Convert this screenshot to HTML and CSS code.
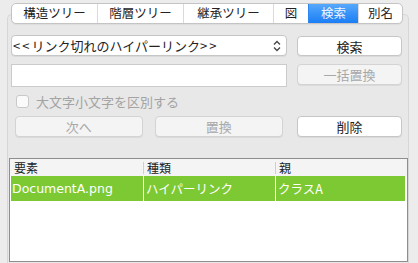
FILE: index.html
```html
<!DOCTYPE html>
<html lang="ja">
<head>
    <meta charset="UTF-8">
    <meta name="viewport" content="width=device-width, initial-scale=1.0">
    <title>検索</title>
    <link rel="stylesheet" href="styles.css">
</head>
<body>
    <div class="tabs">
        <span class="tab tab-struct">構造ツリー</span>
        <span class="tab tab-layer">階層ツリー</span>
        <span class="tab tab-inherit">継承ツリー</span>
        <span class="tab tab-fig">図</span>
        <span class="tab tab-search selected">検索</span>
        <span class="tab tab-alias">別名</span>
    </div>

    <div class="panel">
        <div class="form">
            <div class="row row-top">
                <div class="combo">
                    <span><span class="angle">&lt;&lt;</span>リンク切れのハイパーリンク<span class="angle">&gt;&gt;</span></span>
                    <svg class="chevrons" width="8" height="12" viewBox="0 0 8 12">
                        <polyline points="1,4.5 4,1.5 7,4.5" />
                        <polyline points="1,7.5 4,10.5 7,7.5" />
                    </svg>
                </div>
                <button class="btn btn-side">検索</button>
            </div>

            <div class="row row-field">
                <div class="field"></div>
                <button class="btn btn-side" disabled>一括置換</button>
            </div>

            <label class="check">
                <span class="box"></span>
                大文字小文字を区別する
            </label>

            <div class="row row-buttons">
                <div class="left-buttons">
                    <button class="btn btn-next" disabled>次へ</button>
                    <button class="btn btn-replace" disabled>置換</button>
                </div>
                <button class="btn btn-side">削除</button>
            </div>
        </div>

        <div class="results">
            <div class="results-head">
                <span>要素</span>
                <span class="col-sep">種類</span>
                <span class="col-sep">親</span>
            </div>
            <div class="results-row selected-row">
                <span class="latin">DocumentA.png</span>
                <span>ハイパーリンク</span>
                <span>クラスA</span>
            </div>
        </div>
    </div>
</body>
</html>
```

FILE: styles.css
```css
* {
    box-sizing: border-box;
}
body {
    margin: 0;
    height: 263px;
    overflow: hidden;
    background-color: #ececec;
    font-family: "Noto Sans CJK JP", sans-serif;
    font-size: 13px;
    color: #222;
}

/* tab bar sits over the top border of the panel */
.tabs {
    position: relative;
    z-index: 1;
    display: flex;
    width: 392px;
    height: 21px;
    margin: 3px 0 -10px 11px;
    background-color: white;
    border: 1px solid #c4c4c4;
    border-radius: 5px;
    overflow: hidden;
    box-shadow: 0 1px 1px rgba(0, 0, 0, 0.05);
}
.tab {
    display: flex;
    align-items: center;
    justify-content: center;
    border-left: 1px solid #dadada;
    font-size: 12.5px;
    line-height: 1;
}
.tab:first-child {
    border-left: none;
}
.tab-struct { width: 85px; }
.tab-layer { width: 86px; }
.tab-inherit { width: 90px; }
.tab-fig { width: 35px; }
.tab-search { width: 50px; }
.tab-alias { width: 44px; }
.tab.selected {
    border-left-color: #2c87f5;
    background: linear-gradient(#55a8fb, #1b7ef5);
    color: #eef5ff;
}

.panel {
    width: 402px;
    height: 249px;
    margin-left: 7px;
    padding: 20px 0 0 1px;
    background-color: #e8e8e8;
    border: 1px solid #d6d6d6;
    border-bottom: none;
    border-radius: 5px 5px 0 0;
}

.form {
    width: 391px;
    margin-left: 2px;
}
.row {
    display: flex;
    justify-content: space-between;
    align-items: flex-start;
}
.row-field,
.check,
.row-buttons {
    margin-top: 8px;
}

.btn {
    height: 21px;
    padding: 0;
    font-family: inherit;
    font-size: 13px;
    line-height: 19px;
    color: #222;
    background-color: white;
    border: 1px solid #c6c6c6;
    border-radius: 4px;
    box-shadow: 0 1px 0 rgba(0, 0, 0, 0.06);
}
.btn:disabled {
    color: #a8a8a8;
    background-color: #f4f4f4;
    border-color: #d3d3d3;
}
.btn-side {
    width: 105px;
}
.row-top .btn-side {
    height: 20px;
    margin-top: 1px;
}

.combo {
    display: flex;
    align-items: center;
    justify-content: space-between;
    width: 276px;
    height: 21px;
    padding: 0 5px 0 1px;
    background-color: white;
    border: 1px solid #c6c6c6;
    border-radius: 4px;
    box-shadow: 0 1px 0 rgba(0, 0, 0, 0.06);
    white-space: nowrap;
}
.angle {
    letter-spacing: 2px;
}
.chevrons polyline {
    fill: none;
    stroke: #444;
    stroke-width: 1.3;
}

.field {
    width: 276px;
    height: 23px;
    background-color: white;
    border: 1px solid #cbcbcb;
}

.check {
    display: flex;
    align-items: center;
    height: 13px;
    color: #a3a3a3;
}
.box {
    width: 13px;
    height: 13px;
    margin: 0 7px 0 5px;
    background-color: #fafafa;
    border: 1px solid #c9c9c9;
    border-radius: 3px;
}

.left-buttons {
    display: flex;
    gap: 12px;
    width: 276px;
    padding: 0 4px;
}
.btn-next { width: 128px; }
.btn-replace { width: 129px; }

.results {
    width: 399px;
    height: 104px;
    margin-top: 21px;
    background-color: white;
    border: 1px solid #8e8e8e;
}
.results-head {
    display: grid;
    grid-template-columns: 133px 132px 1fr;
    height: 17px;
    font-size: 12px;
    line-height: 17px;
    background-color: #f4f4f4;
}
.results-head span {
    padding-left: 4px;
}
.results-head .col-sep {
    background: linear-gradient(#cfcfcf, #cfcfcf) left center / 1px 12px no-repeat;
}
.results-row {
    display: grid;
    grid-template-columns: 132px 131px 1fr;
    column-gap: 1px;
    height: 25px;
    padding: 0 2px 0 1px;
    font-size: 12.5px;
    line-height: 25px;
    white-space: nowrap;
}
.selected-row span {
    padding-left: 2px;
    color: white;
    background-color: #7dc933;
}
.selected-row .latin {
    padding-left: 1px;
    font-family: "DejaVu Sans", sans-serif;
}
```
